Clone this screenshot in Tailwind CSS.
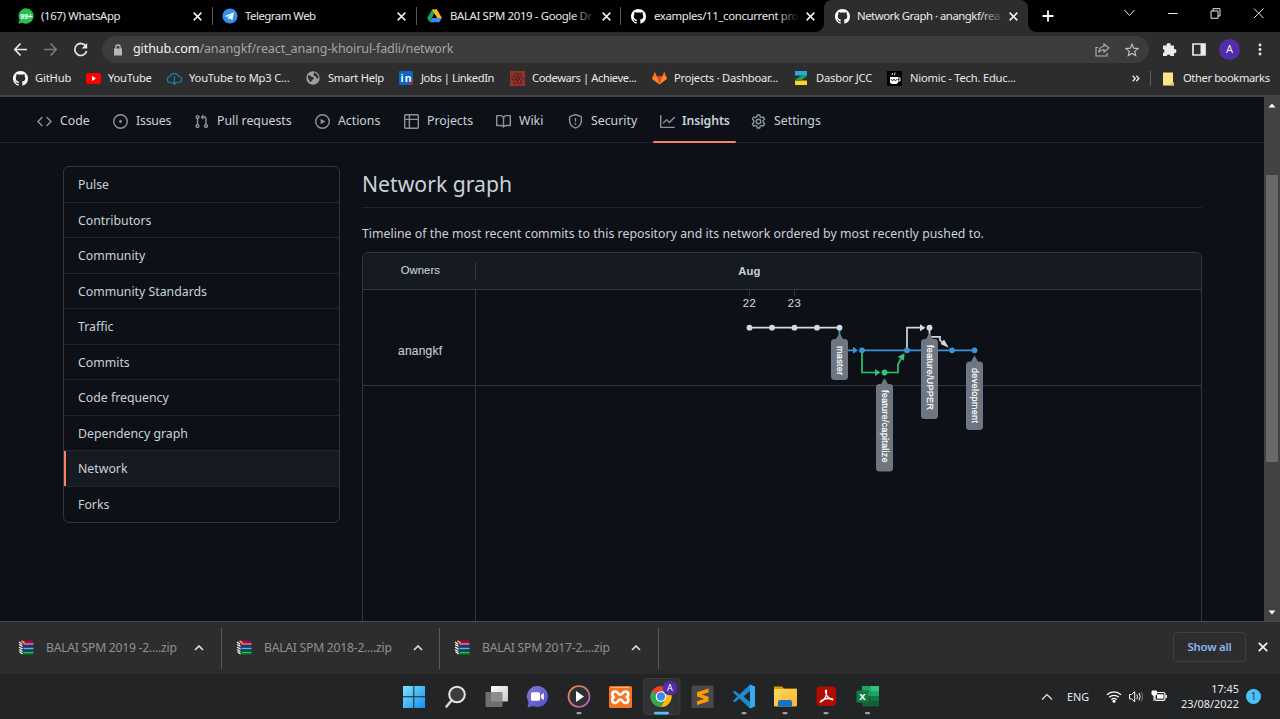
<!DOCTYPE html>
<html lang="en">
<head>
<meta charset="utf-8">
<title>Network Graph · anangkf/react_anang-khoirul-fadli</title>
<script src="https://cdn.jsdelivr.net/npm/@tailwindcss/browser@4"></script>
</head>
<body class="w-[1280px] h-[719px] overflow-hidden bg-[#0d1117] font-['Noto_Sans',sans-serif] text-[11.4px] text-[#e8eaed] flex flex-col whitespace-nowrap">
<svg class="hidden">
  <symbol id="gh" viewBox="0 0 16 16"><path fill="#fff" d="M8 0C3.58 0 0 3.58 0 8c0 3.54 2.29 6.53 5.47 7.59.4.07.55-.17.55-.38 0-.19-.01-.82-.01-1.49-2.01.37-2.53-.49-2.69-.94-.09-.23-.48-.94-.82-1.13-.28-.15-.68-.52-.01-.53.63-.01 1.08.58 1.23.82.72 1.21 1.87.87 2.33.66.07-.52.28-.87.51-1.07-1.78-.2-3.64-.89-3.64-3.95 0-.87.31-1.59.82-2.15-.08-.2-.36-1.02.08-2.12 0 0 .67-.21 2.2.82.64-.18 1.32-.27 2-.27.68 0 1.36.09 2 .27 1.53-1.04 2.2-.82 2.2-.82.44 1.1.16 1.92.08 2.12.51.56.82 1.27.82 2.15 0 3.07-1.87 3.75-3.65 3.95.29.25.54.73.54 1.48 0 1.07-.01 1.93-.01 2.2 0 .21.15.46.55.38A8.013 8.013 0 0016 8c0-4.42-3.58-8-8-8z"/></symbol>
  <symbol id="x" viewBox="0 0 10 10"><path d="M1.500 1.500l7 7M8.500 1.500l-7 7" stroke="#f1f1f1" stroke-width="1.400" fill="none"/></symbol>
  <symbol id="up" viewBox="0 0 10 6"><path d="M1 5l4-4 4 4" stroke="#dadce0" stroke-width="1.700" fill="none"/></symbol>
  <symbol id="rar" viewBox="0 0 16 16">
    <path d="M3 .5h11l1.500 1.500v3H4z" fill="#8d1247"/><path d="M5.500 4h10" stroke="#f58ab5" stroke-width="1.200"/>
    <path d="M4 5.500h11.500v4.500H4z" fill="#123f74"/><path d="M5.500 8.500h10" stroke="#58b8ea" stroke-width="1.300"/>
    <path d="M4 10.500h11.500v4.500H5z" fill="#0b5a2d"/><path d="M5.500 12.700h10" stroke="#35c26e" stroke-width="1.200"/>
    <path d="M1 2l3 2.200M1 4.500l3.500 1.800M1 7l3.500 2.200M1 9.500l3.500 2M1.500 11.500l3 2.500" stroke="#eee" stroke-width="1.400" fill="none"/><path d="M3.500.8l3 2" stroke="#f0b429" stroke-width="1.500"/>
  </symbol>
</svg>

<!-- Tab strip -->
<header class="h-8 shrink-0 bg-black flex items-center pl-2 tracking-[-0.36px]">
  <div class="w-[204px] h-full flex items-center pl-[10px] relative">
    <svg class="size-4 mr-[7px]" viewBox="0 0 16 16"><path d="M8 .3a7.700 7.700 0 1 1-3.700 14.500L.5 15.700l1-3.900A7.700 7.700 0 0 1 8 .3z" fill="#25c04f"/><text x="2" y="10.800" font-size="7.500" font-weight="700" fill="#fff" font-family="Liberation Sans" textLength="12">99+</text></svg>
    <span class="w-[151px]">(167) WhatsApp</span><svg class="size-[11px]"><use href="#x"/></svg>
    <i class="absolute right-[-1px] top-[7px] h-[18px] w-px bg-[#56585b]"></i>
  </div>
  <div class="w-[204px] h-full flex items-center pl-[10px] relative">
    <svg class="size-4 mr-[7px]" viewBox="0 0 16 16"><circle cx="8" cy="8" r="7.600" fill="#3390ec"/><path d="M3 8l9-3.800-1.600 8-2.600-2-1.300 1.400-.4-2.300 3.600-3.200-4.800 2.800z" fill="#fff"/></svg>
    <span class="w-[151px] tracking-[-0.5px]">Telegram Web</span><svg class="size-[11px]"><use href="#x"/></svg>
    <i class="absolute right-[-1px] top-[7px] h-[18px] w-px bg-[#56585b]"></i>
  </div>
  <div class="w-[204px] h-full flex items-center pl-[11px] relative">
    <svg class="w-[15px] h-[14px] mr-[8px]" viewBox="0 0 16 14"><path d="M5.400 0h5.200L5.600 8.700l-2.700 4.600L.2 9z" fill="#21a45a"/><path d="M5.400 0h5.200L15.900 9h-5.200z" fill="#fbbc04"/><path d="M5.500 9h10.400l-2.700 4.600H2.800z" fill="#4285f4"/><path d="M8 4.600L5.500 9h5.200z" fill="#000"/></svg>
    <span class="w-[151px] relative">BALAI SPM 2019 - Google Dr<i class="absolute right-[5px] top-0 w-[24px] h-full bg-linear-to-r from-black/0 to-black"></i></span><svg class="size-[11px]"><use href="#x"/></svg>
    <i class="absolute right-[-1px] top-[7px] h-[18px] w-px bg-[#56585b]"></i>
  </div>
  <div class="w-[204px] h-full flex items-center pl-[11px] relative">
    <svg class="size-[15px] mr-[8px]"><use href="#gh"/></svg>
    <span class="w-[151px] relative">examples/11_concurrent pro<i class="absolute right-[5px] top-0 w-[24px] h-full bg-linear-to-r from-black/0 to-black"></i></span><svg class="size-[11px]"><use href="#x"/></svg>
  </div>
  <div class="w-[204px] h-full flex items-center pl-[11px] relative bg-[#2d2d2d] rounded-t-lg">
    <i class="absolute -left-2 bottom-0 size-2 bg-[radial-gradient(circle_at_0_0,#000_7.500px,#2d2d2d_8px)]"></i>
    <i class="absolute -right-2 bottom-0 size-2 bg-[radial-gradient(circle_at_100%_0,#000_7.500px,#2d2d2d_8px)]"></i>
    <svg class="size-[15px] mr-[7px]"><use href="#gh"/></svg>
    <span class="w-[151px] relative tracking-[-0.5px]">Network Graph · anangkf/rea<i class="absolute right-[3px] top-0 w-[26px] h-full bg-linear-to-r from-[#2d2d2d]/0 to-[#2d2d2d]"></i></span><svg class="size-[11px]"><use href="#x"/></svg>
  </div>
  <svg class="ml-[14px] size-3" viewBox="0 0 12 12"><path d="M6 .5v11M.5 6h11" stroke="#fff" stroke-width="1.800"/></svg>
  <svg class="ml-auto mb-1.5 w-[156px] h-3 mr-[14px]" viewBox="1110 7 156 12" fill="none" stroke="#e8e8e8"><path d="M1124.500 10l5 5.500 5-5.500M1168 13.500h9.500M1211 11h7v7.300h-7zM1213 11V8.700h7v7.300h-2M1254 8.500l9.500 9.500M1263.500 8.500l-9.500 9.500"/></svg>
</header>

<!-- Address bar -->
<div class="h-[34px] shrink-0 bg-[#2d2d2d] flex items-center pl-[13px] pt-px">
  <svg class="w-[76px] h-4" viewBox="13 41 76 16" fill="none" stroke="#e8eaed" stroke-width="1.700"><path d="M27 48.500H15M20.500 42.500L14.800 48.500l5.700 6"/><path d="M44 48.500h12M50.500 42.500l5.700 6-5.700 6" stroke="#76787a"/><path d="M86 45.500a6 6 0 1 0 .6 4.500"/><path d="M87.200 42v5.500h-5.500z" fill="#e8eaed" stroke="none"/></svg>
  <div class="ml-[13px] w-[1047px] h-[27px] rounded-full bg-[#3c3c3c] flex items-center pl-[11px] pr-[10px] text-[12.600px]">
    <svg class="w-[10px] h-3 mr-[10px]" viewBox="0 0 10 12"><path d="M1 4.500h8v7H1z" fill="#b5b7ba"/><path d="M2.800 5V3.200a2.200 2.200 0 0 1 4.400 0V5" fill="none" stroke="#b5b7ba" stroke-width="1.300"/></svg>
    <span class="text-[#a3a5a8] tracking-[-0.13px]"><b class="font-normal text-[#f1f3f4]">github.com</b>/anangkf/react_anang-khoirul-fadli/network</span>
    <svg class="ml-auto w-[15px] h-[14px] mr-[15px]" viewBox="0 0 15 14" fill="none" stroke="#b0b2b5" stroke-width="1.100"><path d="M3 4.500H1V13h11v-3"/><path d="M9 1l5 4-5 4V6.800C6.500 6.800 5 7.500 3.800 9.500 4 6 6 3.500 9 3.200z"/></svg>
    <svg class="size-[14px]" viewBox="0 0 14 14" fill="none" stroke="#b9bbbe" stroke-width="1.200"><path d="M7 1.200l1.700 4 4.300.4-3.300 2.800 1 4.200L7 10.400l-3.700 2.200 1-4.200L1 5.600l4.300-.4z"/></svg>
  </div>
  <svg class="ml-[13px] size-[15px]" viewBox="0 0 15 15"><path d="M1 3.500h3.700a2 2 0 1 1 3.900 0H12v3.700a2 2 0 1 1 0 3.900V14H8.600a2 2 0 0 0-3.900 0H1v-3.100a2 2 0 0 0 0-3.900z" fill="#e8eaed"/></svg>
  <svg class="ml-[15px] w-[14px] h-[13px]" viewBox="0 0 14 13"><path d="M1 1h12v11H1z" fill="none" stroke="#e8eaed" stroke-width="1.700"/><path d="M8.500 1H13v11H8.500z" fill="#e8eaed"/></svg>
  <span class="ml-[13px] size-[21px] rounded-full bg-[#512da8] flex items-center justify-center text-[11px]">A</span>
  <svg class="ml-[18px] w-[4px] h-[13px]" viewBox="0 0 4 13" fill="#e8eaed"><circle cx="2" cy="2" r="1.400"/><circle cx="2" cy="6.500" r="1.400"/><circle cx="2" cy="11" r="1.400"/></svg>
</div>

<!-- Bookmarks -->
<nav class="h-[31px] shrink-0 bg-[#2d2d2d] border-b-2 border-[#424345] flex items-center pl-[13px] pb-[4px] text-[11.200px]">
  <div class="w-[73px] flex items-center gap-[7px] tracking-[-0.15px]"><svg class="size-[15px]"><use href="#gh"/></svg>GitHub</div>
  <div class="w-[81px] flex items-center gap-[7px] tracking-[-0.22px]"><svg class="w-[15px] h-[11px]" viewBox="0 0 15 11"><rect width="15" height="11" rx="2.500" fill="#f00"/><path d="M6 3l4 2.500L6 8z" fill="#fff"/></svg>YouTube</div>
  <div class="w-[139px] flex items-center gap-[7px] tracking-[-0.2px]"><svg class="size-[15px]" viewBox="0 0 15 15" fill="none" stroke="#1b7fb5" stroke-width="1.200"><path d="M4.500 11.500H3.500a3 3 0 0 1-.5-6 4.600 4.600 0 0 1 8.700 0 3 3 0 0 1 0 6h-1M7.500 5v8.500M5 11l2.500 2.500L10 11"/></svg>YouTube to Mp3 C...</div>
  <div class="w-[93px] flex items-center gap-[8px] tracking-[-0.3px]"><svg class="size-[14px]" viewBox="0 0 14 14"><circle cx="7" cy="7" r="6.700" fill="#9aa0a6"/><path d="M2 4.500C4 3.500 4.500 6 6.500 6S8 8 6.500 9 5 11.500 4 11 4.500 8.500 2 8zM8 1.500c0 2-1.500 2 0 3s2 1 2.500 2.500 1.500 0 2 0-.5-4.500-4.500-5.500z" fill="#2d2d2d"/></svg>Smart Help</div>
  <div class="w-[111px] flex items-center gap-[8px] tracking-[-0.44px]"><svg class="size-[14px]" viewBox="0 0 14 14"><rect width="14" height="14" rx="1" fill="#0a66c2"/><text x="1.500" y="11.200" font-size="11" font-weight="700" fill="#fff" font-family="Liberation Sans" textLength="10.500">in</text><circle cx="12.200" cy="12.200" r="1.700" fill="#d11124"/></svg>Jobs | LinkedIn</div>
  <div class="w-[142px] flex items-center gap-[7px] tracking-[-0.42px]"><svg class="size-[15px]" viewBox="0 0 15 15"><rect width="15" height="15" fill="#96302c"/><g fill="none" stroke="#3d1a18" stroke-width="1"><circle cx="7.500" cy="7.500" r="1.800"/><path d="M7.500 5.500c-1-3 3-4 4-1.500M9.300 6.500c2-2 5 .5 3.300 2.800M9.500 8.800c3 .8 2 4.500-1 4M7.500 9.500c1 3-3 4-4.500 1.500M5.700 8.500c-2.200 2-4.700-.8-3.300-3M5.500 6.300c-2.500-1-1.500-4.300 1.500-4"/></g></svg>Codewars | Achieve...</div>
  <div class="w-[142px] flex items-center gap-[7px] tracking-[-0.24px]"><svg class="w-[15px] h-[14px]" viewBox="0 0 15 14"><path d="M7.500 13.500L0 7.800 2.800.5l2 5h5.400l2-5L15 7.800z" fill="#fc6d26"/><path d="M7.500 13.500L4.800 5.500h5.400z" fill="#e24329"/><path d="M0 7.800L1 5.500h3.800l2.700 8zM15 7.800l-1-2.300h-3.800l-2.700 8z" fill="#fca326" opacity=".45"/></svg>Projects · Dashboar...</div>
  <div class="w-[93px] flex items-center gap-[8px] tracking-[-0.18px]"><svg class="size-[14px]" viewBox="0 0 14 14"><path d="M1 0h12v4.500H1z" fill="#29a9e0"/><path d="M1 9.500h12V14H1z" fill="#fbd51c"/><path d="M8 4h5v1L6.500 10H1V9z" fill="#1d9b62"/></svg>Dasbor JCC</div>
  <div class="flex items-center gap-[8px] tracking-[-0.22px]"><svg class="size-[15px]" viewBox="0 0 15 15"><rect width="15" height="15" fill="#000"/><path d="M3 6h8v5.500L9.500 13h-5L3 11.500z" fill="#fff"/><path d="M5.500 2L5 4.300M8 1.500l-.5 2.800" stroke="#fff" stroke-width=".9"/><path d="M11 7h2v3h-2" fill="none" stroke="#fff"/><path d="M4 8l1.500 2L7 8l1.500 2L10 8" fill="none" stroke="#000" stroke-width=".8"/></svg>Niomic - Tech. Educ...</div>
  <svg class="ml-auto w-[8px] h-[7px] mr-[-2px]" viewBox="0 0 8 7" fill="none" stroke="#e8eaed" stroke-width="1.300"><path d="M.7.7l2.600 2.800L.7 6.300M4.300.7l2.600 2.800-2.600 2.800"/></svg>
  <i class="ml-[12px] mr-[11px] w-px h-[15px] bg-[#5b5d60]"></i>
  <svg class="w-[12px] h-[14px] mr-[9px]" viewBox="0 0 12 14"><path d="M1 .5h10V10l1 1v2.500H1z" fill="#ffe38a"/><path d="M9 11h3v2.500H9z" fill="#e8bf4b"/></svg>
  <span class="w-[97px] shrink-0 tracking-[-0.4px]">Other bookmarks</span>
</nav>

<!-- Page -->
<div class="h-[524px] shrink-0 flex text-[12.300px] text-[#c9d1d9] overflow-hidden">
  <div class="w-[1264px] h-full flex flex-col">
    <nav class="h-[46px] shrink-0 border-b border-[#21262d] pl-[37px] flex items-center pt-[3px] [&_svg]:size-[15px] [&_svg]:mr-2 [&_svg]:fill-[#8b949e]">
      <div class="w-[76px] flex items-center"><svg viewBox="0 0 16 16"><path d="M4.720 3.220a.75.75 0 011.060 1.060L2.060 8l3.720 3.720a.75.75 0 11-1.060 1.060L.470 8.530a.75.75 0 010-1.060l4.250-4.250zm6.560 0a.75.75 0 10-1.060 1.060L13.940 8l-3.720 3.720a.75.75 0 101.060 1.060l4.250-4.250a.75.75 0 000-1.060l-4.250-4.250z"/></svg>Code</div>
      <div class="w-[81px] flex items-center tracking-[-0.2px]"><svg viewBox="0 0 16 16"><path d="M8 9.500a1.500 1.500 0 100-3 1.500 1.500 0 000 3z"/><path fill-rule="evenodd" d="M8 0a8 8 0 100 16A8 8 0 008 0zM1.500 8a6.500 6.500 0 1113 0 6.500 6.500 0 01-13 0z"/></svg>Issues</div>
      <div class="w-[121px] flex items-center"><svg viewBox="0 0 16 16"><path fill-rule="evenodd" d="M7.177 3.073L9.573.677A.25.25 0 0110 .854v4.792a.25.25 0 01-.427.177L7.177 3.427a.25.25 0 010-.354zM3.750 2.500a.75.75 0 100 1.500.75.75 0 000-1.500zm-2.250.75a2.250 2.250 0 113 2.122v5.256a2.251 2.251 0 11-1.500 0V5.372A2.250 2.250 0 011.500 3.250zM11 2.500h-1V4h1a1 1 0 011 1v5.628a2.251 2.251 0 101.500 0V5A2.500 2.500 0 0011 2.500zm1 10.250a.75.75 0 111.500 0 .75.75 0 01-1.500 0zM3.750 12a.75.75 0 100 1.500.75.75 0 000-1.500z"/></svg>Pull requests</div>
      <div class="w-[89px] flex items-center"><svg viewBox="0 0 16 16"><path fill-rule="evenodd" d="M1.500 8a6.500 6.500 0 1113 0 6.500 6.500 0 01-13 0zM8 0a8 8 0 100 16A8 8 0 008 0zM6.379 5.227A.25.25 0 006 5.442v5.117a.25.25 0 00.379.214l4.264-2.559a.25.25 0 000-.428L6.379 5.227z"/></svg>Actions</div>
      <div class="w-[92px] flex items-center"><svg viewBox="0 0 16 16"><path fill-rule="evenodd" d="M0 1.750C0 .784.784 0 1.750 0h12.500C15.216 0 16 .784 16 1.750v12.500A1.750 1.750 0 0114.250 16H1.750A1.750 1.750 0 010 14.250V1.750zM1.500 6.500v7.750c0 .138.112.25.25.25H5v-8H1.500zM5 5H1.500V1.750a.25.25 0 01.25-.25H5V5zm1.500 1.500v8h7.750a.25.25 0 00.25-.25V6.500h-8zm8-1.500h-8V1.500h7.750a.25.25 0 01.25.25V5z"/></svg>Projects</div>
      <div class="w-[72px] flex items-center"><svg viewBox="0 0 16 16"><path fill-rule="evenodd" d="M0 1.750A.75.75 0 01.75 1h4.253c1.227 0 2.317.59 3 1.501A3.744 3.744 0 0111.006 1h4.245a.75.75 0 01.75.75v10.500a.75.75 0 01-.75.75h-4.507a2.250 2.250 0 00-1.591.659l-.622.621a.75.75 0 01-1.060 0l-.622-.621A2.250 2.250 0 005.258 13H.750a.75.75 0 01-.75-.75V1.750zm8.755 3a2.250 2.250 0 012.250-2.250H14.500v9h-3.757c-.71 0-1.400.201-1.992.572l.004-7.322zm-1.504 7.324l.004-5.073-.002-2.253A2.250 2.250 0 005.003 2.500H1.500v9h3.757a3.750 3.750 0 011.994.574z"/></svg>Wiki</div>
      <div class="w-[92px] flex items-center"><svg viewBox="0 0 16 16"><path fill-rule="evenodd" d="M7.467.133a1.750 1.750 0 011.066 0l5.250 1.680A1.750 1.750 0 0115 3.480V7c0 1.566-.32 3.182-1.303 4.682-.983 1.498-2.585 2.813-5.032 3.855a1.700 1.700 0 01-1.330 0c-2.447-1.042-4.049-2.357-5.032-3.855C1.320 10.182 1 8.566 1 7V3.480a1.750 1.750 0 011.217-1.667l5.250-1.680zm.61 1.429a.25.25 0 00-.153 0l-5.250 1.680a.25.25 0 00-.174.238V7c0 1.358.275 2.666 1.057 3.860.784 1.194 2.121 2.340 4.366 3.297a.2.2 0 00.154 0c2.245-.956 3.582-2.104 4.366-3.298C13.225 9.666 13.500 8.360 13.500 7V3.480a.25.25 0 00-.174-.237l-5.250-1.680zM8.750 4.750a.75.75 0 00-1.500 0v3a.75.75 0 001.500 0v-3zM9 10.500a1 1 0 11-2 0 1 1 0 012 0z"/></svg>Security</div>
      <div class="w-[91px] flex items-center relative h-full font-semibold tracking-[-0.1px]"><svg class="!mr-[7px]" viewBox="0 0 16 16"><path fill-rule="evenodd" d="M1.500 1.750a.75.75 0 00-1.500 0v12.500c0 .414.336.75.75.75h14.500a.75.75 0 000-1.500H1.500V1.750zm14.280 2.530a.75.75 0 00-1.060-1.060L10 7.940 7.530 5.470a.75.75 0 00-1.060 0L3.220 8.720a.75.75 0 001.060 1.060L7 7.060l2.470 2.470a.75.75 0 001.060 0l5.250-5.250z"/></svg>Insights<i class="absolute -left-[7px] -bottom-px w-[83px] h-[2px] bg-[#f78166] rounded"></i></div>
      <div class="flex items-center"><svg viewBox="0 0 16 16" class="!fill-none" stroke="#8b949e" stroke-width="1.500"><circle cx="8" cy="8" r="2.400"/><path stroke-linejoin="round" d="M6.700 1h2.600l.5 2 1.400.8 2-.6 1.300 2.200L13 6.900v2.200l1.500 1.500-1.300 2.200-2-.6-1.400.8-.5 2H6.700l-.5-2-1.400-.8-2 .6-1.300-2.200L3 9.100V6.900L1.500 5.400l1.300-2.200 2 .6L6.200 3z"/></svg>Settings</div>
    </nav>
    <div class="flex pl-[63px] pt-[23px] gap-[22px]">
      <aside class="w-[277px] h-[357px] border border-[#30363d] rounded-md overflow-hidden grid grid-rows-10 [&>div]:pl-[14px] [&>div]:pt-[2px] [&>div]:flex [&>div]:items-center divide-y divide-[#21262d]">
        <div>Pulse</div><div>Contributors</div><div>Community</div><div>Community Standards</div><div>Traffic</div><div>Commits</div><div>Code frequency</div><div>Dependency graph</div>
        <div class="bg-[#161b22] relative">Network<i class="absolute left-0 top-0 w-[2px] h-full bg-[#f78166]"></i></div>
        <div>Forks</div>
      </aside>
      <main class="w-[840px]">
        <h1 class="h-[42px] border-b border-[#21262d] text-[21.200px] leading-[36px]">Network graph</h1>
        <p class="h-[44px] pt-[15px] leading-[22px] tracking-[0.03px]">Timeline of the most recent commits to this repository and its network ordered by most recently pushed to.</p>
        <div class="w-[840px] h-[400px] border border-[#30363d] rounded-md">
          <svg class="block w-[838px] h-[398px]" viewBox="363 253 838 398" font-family="Liberation Sans" font-size="11.300" fill="#c9d1d9" text-anchor="middle">
            <path d="M363 290v-32a5 5 0 0 1 5-5h828a5 5 0 0 1 5 5v32z" fill="#161b22"/>
            <path d="M363 289.500h838M363 385.500h838M475.500 262v19M475.500 290v361M749.500 290v6M794.500 290v6" stroke="#30363d"/>
            <text x="420.300" y="274" textLength="39" stroke="#c9d1d9" stroke-width=".1">Owners</text>
            <text x="420" y="354.500" font-size="12" textLength="44" stroke="#c9d1d9" stroke-width=".1">anangkf</text>
            <text x="749.300" y="275" font-weight="700" textLength="22">Aug</text>
            <text x="749.300" y="307" textLength="13" stroke="#c9d1d9" stroke-width=".1">22</text><text x="794.300" y="307" textLength="13" stroke="#c9d1d9" stroke-width=".1">23</text>
            <g fill="none" stroke-width="1.700">
              <path d="M839.500 328v22.300H855M862 350.300h112.500" stroke="#3a94d6"/>
              <path d="M862 350v22.500h14M886 372.500h12v-8l3-6" stroke="#2dc56f"/>
              <path d="M749.500 327.700h90M907 349v-21.300h14M929.500 328v8.800H940v3.500l3 2.500" stroke="#d5d8e0"/>
            </g>
            <path d="M853 346.800l5 3.500-5 3.500z" fill="#3a94d6"/>
            <path d="M875 369l5.500 3.500-5.500 3.500zM897.800 356.800l6.700-3.500-.5 7.500z" fill="#2dc56f"/>
            <path d="M920 324.200l5.500 3.500-5.500 3.500zM940.500 344l3.500-4.500 4.800 8.200z" fill="#d5d8e0"/>
            <g fill="#d5d8e0"><circle cx="749.500" cy="327.700" r="2.900"/><circle cx="772" cy="327.700" r="2.900"/><circle cx="794.500" cy="327.700" r="2.900"/><circle cx="817" cy="327.700" r="2.900"/><circle cx="839.500" cy="327.700" r="2.900"/><circle cx="929.500" cy="327.700" r="2.900"/></g>
            <g fill="#3a94d6"><circle cx="862" cy="350.300" r="2.900"/><circle cx="907" cy="350.300" r="2.900"/><circle cx="952" cy="350.300" r="2.900"/><circle cx="974.500" cy="350.300" r="2.900"/></g>
            <circle cx="884.500" cy="372.500" r="2.900" fill="#2dc56f"/>
            <g fill="#6e7681">
              <rect x="831" y="339" width="17" height="41" rx="3.500"/><path d="M839.500 333l4 7h-8z"/>
              <rect x="876" y="384" width="17" height="87.500" rx="3.500"/><path d="M884.500 378l4 7h-8z"/>
              <rect x="921" y="339" width="17" height="80" rx="3.500"/><path d="M929.500 333l4 7h-8z"/>
              <rect x="966" y="361.500" width="17" height="68.500" rx="3.500"/><path d="M974.500 355.500l4 7h-8z"/>
            </g>
            <g fill="#fff" font-size="9.200" text-anchor="start" stroke="#fff" stroke-width=".2">
              <text transform="translate(836.800 346) rotate(90)" textLength="29">master</text>
              <text transform="translate(881.800 390) rotate(90)" textLength="72.500">feature/capitalize</text>
              <text transform="translate(926.800 345) rotate(90)" textLength="65">feature/UPPER</text>
              <text transform="translate(971.800 368) rotate(90)" textLength="55">development</text>
            </g>
          </svg>
        </div>
      </main>
    </div>
  </div>
  <div class="w-4 h-full bg-[#424242] flex flex-col items-center">
    <svg class="w-2 h-[5px] mt-[6px]" viewBox="0 0 8 5"><path d="M.5 4.500h7L4 .5z" fill="#fff"/></svg>
    <div class="mt-[67px] w-3 h-[287px] bg-[#686868]"></div>
    <svg class="w-2 h-[5px] mt-auto mb-[6px]" viewBox="0 0 8 5"><path d="M.5.5h7L4 4.500z" fill="#fff"/></svg>
  </div>
</div>

<!-- Downloads -->
<div class="h-[53px] shrink-0 bg-[#2d2d2d] border-t border-[#4a4a4c] flex items-center text-[12.200px] tracking-[-0.26px] text-[#8e9093]">
  <div class="w-[222px] h-[41px] border-r border-[#5a5a5c] flex items-center pl-[18px]"><svg class="size-4 mr-[12px]"><use href="#rar"/></svg><span class="w-[148px] pt-px">BALAI SPM 2019 -2....zip</span><svg class="w-[10px] h-[6px]"><use href="#up"/></svg></div>
  <div class="w-[218px] h-[41px] border-r border-[#5a5a5c] flex items-center pl-[14px]"><svg class="size-4 mr-[12px]"><use href="#rar"/></svg><span class="w-[149px] pt-px">BALAI SPM 2018-2....zip</span><svg class="w-[10px] h-[6px]"><use href="#up"/></svg></div>
  <div class="w-[219px] h-[41px] border-r border-[#5a5a5c] flex items-center pl-[14px]"><svg class="size-4 mr-[12px]"><use href="#rar"/></svg><span class="w-[149px] pt-px">BALAI SPM 2017-2....zip</span><svg class="w-[10px] h-[6px]"><use href="#up"/></svg></div>
  <div class="ml-auto w-[73px] h-[30px] mb-[2px] border border-[#3e3f41] rounded flex items-center justify-center text-[#8ab4f8] text-[11.400px] font-semibold">Show all</div>
  <svg class="size-3 ml-[11px] mr-[11px] mb-[2px]"><use href="#x"/></svg>
</div>

<!-- Taskbar -->
<footer class="h-[45px] shrink-0 bg-[#222425] flex items-center pl-[402px]">
  <svg class="w-[480px] h-[45px] shrink-0" viewBox="402 674 480 45">
    <defs>
      <linearGradient id="win" x1="0" y1="0" x2="1" y2="1"><stop stop-color="#7de3fb"/><stop offset="1" stop-color="#1090f0"/></linearGradient>
      <linearGradient id="chat" x1="0" y1="0" x2="1" y2="1"><stop stop-color="#8a78d8"/><stop offset="1" stop-color="#4b50c8"/></linearGradient>
      <linearGradient id="ring" x1="0" y1="0" x2="1" y2="1"><stop stop-color="#f5903c"/><stop offset="1" stop-color="#a55cc4"/></linearGradient>
      <linearGradient id="fold" x1="0" y1="0" x2="1" y2="1"><stop stop-color="#ffd75e"/><stop offset="1" stop-color="#f7b52c"/></linearGradient>
      <linearGradient id="tv" x1="0" y1="0" x2="1" y2="1"><stop stop-color="#fff"/><stop offset="1" stop-color="#c9c9c9"/></linearGradient>
    </defs>
    <path d="M403 686h10.300v10.300H403zM414.300 686H425v10.300h-10.700zM403 697.300h10.300V708H403zM414.300 697.300H425V708h-10.700z" fill="url(#win)"/>
    <circle cx="457" cy="694.500" r="7.800" fill="#3b3d3e" stroke="#e4e4e4" stroke-width="2"/><path d="M451.500 700.500l-5 6" stroke="#d8d8d8" stroke-width="2.600" stroke-linecap="round"/>
    <rect x="491" y="686" width="17" height="15.500" rx="1" fill="url(#tv)"/><rect x="485.500" y="692" width="17" height="15" rx="1" fill="#7d7d7d" opacity=".85"/>
    <path d="M537.500 686a10.500 10.500 0 1 1-4.500 20l-5.500 1.500 1-5.500a10.500 10.500 0 0 1 9-16z" fill="url(#chat)"/><rect x="531" y="692.200" width="9" height="8.500" rx="1.500" fill="#fff"/><path d="M541 695l2.800-2v7l-2.800-2z" fill="#fff"/>
    <circle cx="579" cy="696.500" r="10.500" fill="#2e3033" stroke="url(#ring)" stroke-width="1.700"/><path d="M576 691l8 5.500-8 5.500z" fill="#fff"/>
    <rect x="609" y="686" width="23" height="22" rx="1.500" fill="#f37623"/><path d="M611 687.500h18" stroke="#fbbf92" stroke-width=".8"/><path d="M615.500 691.500c2.500 0 2.500 3.300 4.800 3.300s2.300-3.300 4.800-3.300c4.500 0 4 5.500.5 5.500 3.500 0 4 6-.5 6-2.500 0-2.500-3.500-4.800-3.500s-2.300 3.500-4.800 3.500c-4.500 0-4-6-.5-6-3.500 0-4-5.500.5-5.500z" fill="none" stroke="#fff" stroke-width="2.400"/>
    <rect x="643.500" y="678.500" width="36.500" height="36" rx="3" fill="#303233" stroke="#3a3c3d"/>
    <circle cx="661" cy="696.500" r="10.500" fill="#ea4335"/><path d="M661 696.500l-9.100-5.300A10.500 10.500 0 0 0 661 707l5-8.300z" fill="#34a853"/><path d="M661 707a10.500 10.500 0 0 0 9.100-15.800H661l5 7.500z" fill="#fbbc05"/><circle cx="661" cy="696.500" r="5.300" fill="#fff"/><circle cx="661" cy="696.500" r="4.200" fill="#4285f4"/>
    <circle cx="670" cy="688" r="7.300" fill="#512da8"/><text x="670" y="691.300" font-size="9" text-anchor="middle" fill="#fff">A</text>
    <rect x="654" y="711.800" width="15" height="2.600" rx="1.300" fill="#5bc0f5"/>
    <rect x="691.500" y="685.500" width="22" height="22.500" rx="1.500" fill="#48494a"/><path d="M697 692.200l11.500-3.600v3.800l-7 2.200 7 2.200v4.700L697 705v-3.800l7.200-2.300-7.200-2.300z" fill="#ff9800"/>
    <path d="M750 684.500l5 2.300v19.400l-5 2.300-10.500-10-4.700 3.700-2-1.200 4.700-4.500-4.700-4.500 2-1.200 4.700 3.700zM750 691l-6.500 5.500 6.500 5.500z" fill="#2089d5" fill-rule="evenodd"/><path d="M750 684.500l5 2.300v19.400l-5 2.300z" fill="#35a9f2"/>
    <path d="M774 686.500h8l2 2h13v5h-23z" fill="#d9a010"/><rect x="774" y="689" width="23" height="17.500" rx="1" fill="url(#fold)"/><path d="M778 706.500v-4.500a2 2 0 0 1 2-2h10a2 2 0 0 1 2 2v4.500z" fill="#1673c4"/>
    <rect x="816.500" y="686.500" width="19.500" height="19.500" rx="3.500" fill="#b30b00"/><path d="M820.500 702c4-2 6.500-6.500 6-11.500-.8-.8-1.300 0-.8 2 1 4 3.300 6.500 6.800 7.300 1-.7-1-1.500-4-1.300s-6.500 1.300-8 3z" fill="none" stroke="#fff" stroke-width="1.300"/>
    <rect x="862" y="686" width="17" height="20.500" rx="1" fill="#185c37"/><path d="M862 686h8.500v10H862z" fill="#21a366"/><path d="M870.500 686h8.500v5h-8.500z" fill="#33c481"/><path d="M870.500 691h8.500v5h-8.500z" fill="#21a366"/><path d="M870.500 696h8.500v5h-8.500z" fill="#107c41"/><rect x="856.500" y="690.500" width="12" height="12" rx="1" fill="#107c41"/><text x="862.500" y="700" font-size="9.500" font-weight="700" text-anchor="middle" fill="#fff">X</text>
    <g fill="#a0a0a0"><rect x="576.500" y="712" width="5" height="2.300" rx="1.100"/><rect x="741.500" y="712" width="5" height="2.300" rx="1.100"/><rect x="782.500" y="712" width="5" height="2.300" rx="1.100"/><rect x="823.500" y="712" width="5" height="2.300" rx="1.100"/><rect x="865" y="712" width="5" height="2.300" rx="1.100"/></g>
  </svg>
  <svg class="w-[12px] h-[8px] ml-[159px]" viewBox="0 0 12 8"><path d="M1 6.500L6 1.500l5 5" fill="none" stroke="#e8e8e8" stroke-width="1.200"/></svg>
  <span class="ml-[14px] w-[39px] text-[10.800px] pt-[2px]">ENG</span>
  <svg class="w-[62px] h-[14px]" viewBox="1106 690 62 14" fill="none" stroke="#fff" stroke-width="1.200"><path d="M1107 694.700a10 10 0 0 1 14 0M1109.200 697.200a7 7 0 0 1 9.600 0M1111.300 699.600a4 4 0 0 1 5.400 0"/><circle cx="1114" cy="701.200" r="1" fill="#fff"/><path d="M1129.500 694.500h2l3.200-2.800v10l-3.200-2.800h-2zM1136.800 694.500q1.500 2.300 0 4.600M1139 693q2.500 3.700 0 7.400" stroke-width="1"/><path d="M1141 691.800q3.200 5 0 9.800" stroke="#777" stroke-width="1"/><rect x="1155" y="692.500" width="10" height="7.800" rx="1.500"/><rect x="1157" y="694.300" width="6.500" height="4.300" fill="#fff" stroke="none"/><path d="M1166.300 695v3"/><path d="M1152 691h4.500v3.500q-2.200 2-4.500 0zM1154 695v6" fill="#fff" stroke-width="1"/></svg>
  <div class="w-[71px] text-right text-[10.900px] leading-[15px] pb-[2px]">17:45<br>23/08/2022</div>
  <span class="ml-[7px] size-[15px] rounded-full bg-[#4cc2ff] text-[#12303f] text-[10px] flex items-center justify-center">1</span>
</footer>
</body>
</html>
